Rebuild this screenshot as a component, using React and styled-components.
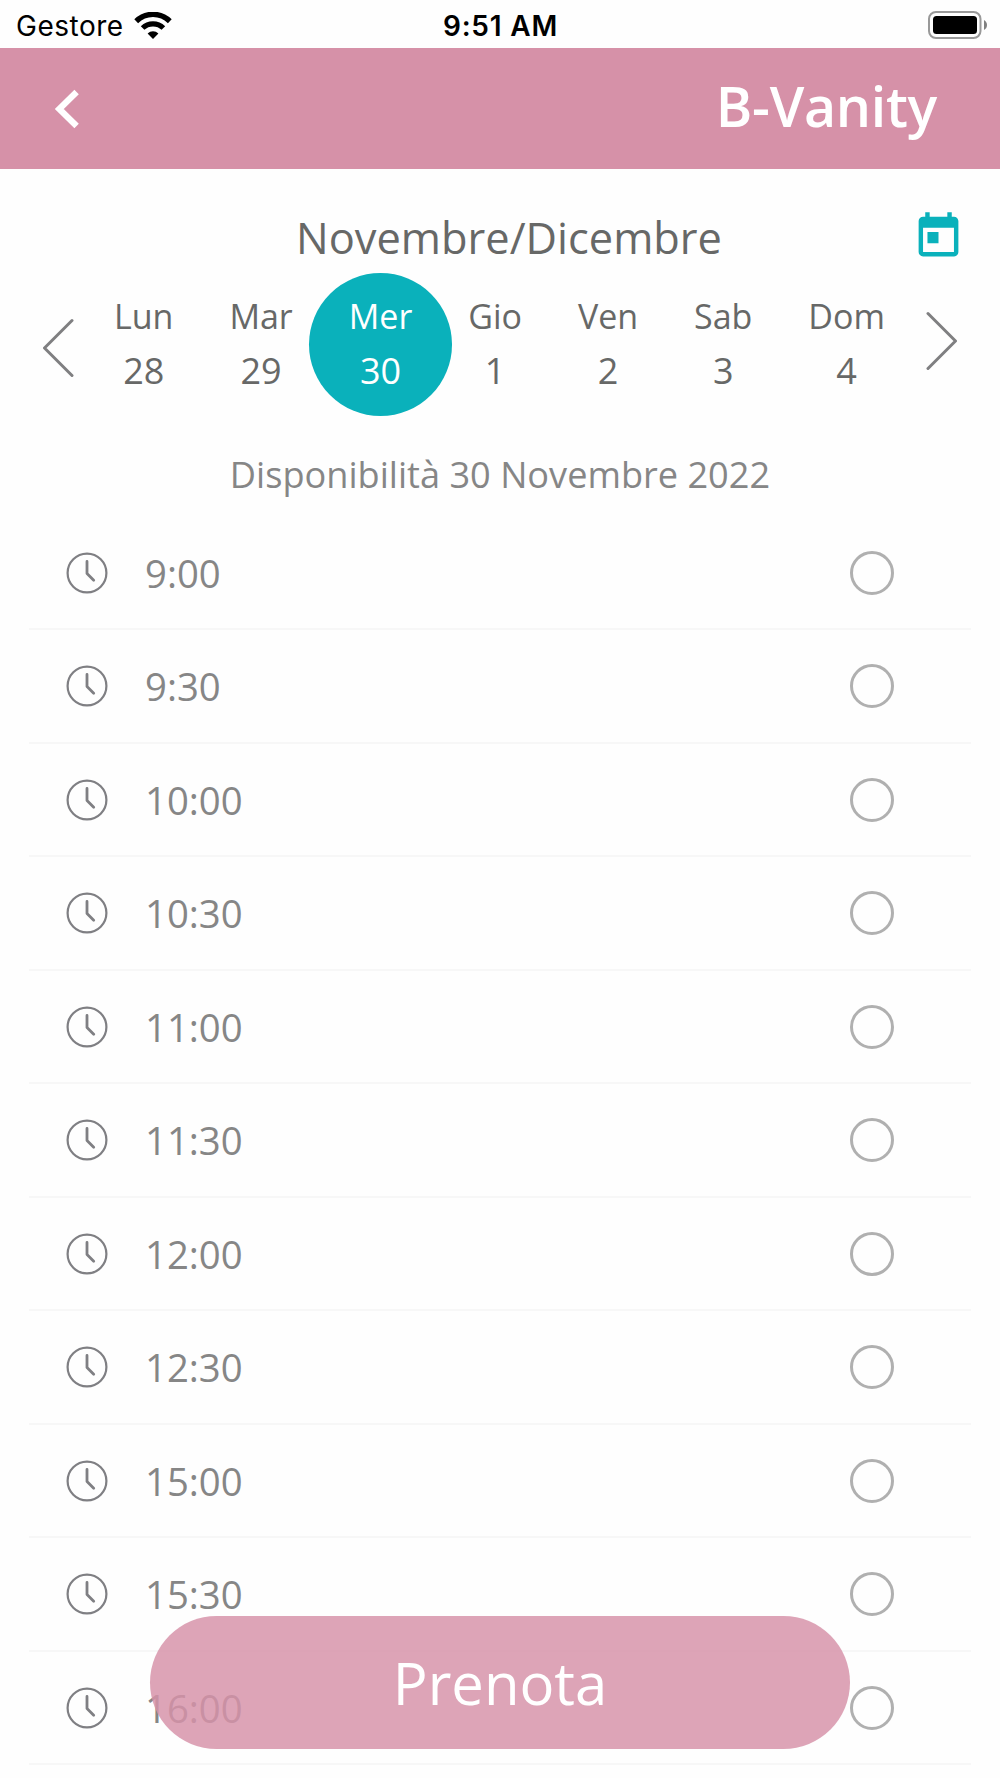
import React, { useState } from 'react';
import styled, { createGlobalStyle } from 'styled-components';
import { MdToday } from 'react-icons/md';

const GlobalStyle = createGlobalStyle`
  * {
    box-sizing: border-box;
  }

  body {
    margin: 0;
    background: #fefefe;
    font-family: 'Open Sans', 'Noto Sans', sans-serif;
  }
`;

const Screen = styled.div`
  position: relative;
  width: 1000px;
  height: 1778px;
  overflow: hidden;
  background: #fefefe;
`;

const StatusBar = styled.div`
  display: grid;
  grid-template-columns: 1fr auto 1fr;
  align-items: center;
  height: 48px;
  padding: 3px 13px 0 16px;
  font-family: Inter, 'Liberation Sans', sans-serif;
  font-size: 28px;
  line-height: 44px;
  color: #000;
`;

const Carrier = styled.div`
  display: flex;
  align-items: center;
  gap: 10px;
  letter-spacing: 0.5px;
`;

const Clock = styled.div`
  margin-left: -2px;
  font-weight: 600;
  letter-spacing: 0.8px;
`;

const BatteryIcon = styled.svg`
  justify-self: end;
  margin-top: -2px;
`;

const Header = styled.header`
  display: flex;
  align-items: center;
  justify-content: space-between;
  height: 121px;
  padding: 0 63px 0 54px;
  background: #d691a8;
`;

const BackButton = styled.button`
  display: flex;
  padding: 0;
  border: none;
  background: none;
  cursor: pointer;
`;

const Brand = styled.h1`
  margin: 0;
  padding-bottom: 5px;
  font-size: 55.5px;
  font-weight: 600;
  line-height: 76px;
  letter-spacing: -0.3px;
  color: #fff;
`;

const MonthBar = styled.div`
  display: grid;
  grid-template-columns: 80px 1fr 80px;
  align-items: center;
  height: 104px;
  padding: 32px 8px 0 26px;
`;

const Month = styled.h2`
  margin: 0;
  padding-top: 1px;
  text-align: center;
  font-size: 43.4px;
  font-weight: 400;
  line-height: 60px;
  color: #676867;
`;

const CalendarButton = styled.button`
  display: flex;
  justify-self: start;
  margin-top: -2px;
  padding: 0;
  border: none;
  background: none;
  color: #0ab1bb;
  cursor: pointer;
`;

const Week = styled.div`
  display: flex;
  align-items: flex-start;
  justify-content: space-between;
  height: 143px;
  padding: 0 42px;
`;

const ArrowButton = styled.button`
  display: flex;
  margin-top: ${(props) => props.$top}px;
  padding: 0;
  border: none;
  background: none;
  cursor: pointer;
`;

const Days = styled.div`
  display: flex;
  justify-content: space-between;
  width: 771px;
  margin-left: -1px;
  padding-top: 16px;
`;

const Day = styled.div`
  position: relative;
  z-index: 0;
  text-align: center;
  color: ${(props) => (props.$active ? '#fff' : '#676867')};
  cursor: pointer;

  &::before {
    content: '';
    display: ${(props) => (props.$active ? 'block' : 'none')};
    position: absolute;
    z-index: -1;
    top: -16px;
    left: 50%;
    width: 143px;
    height: 143px;
    margin-left: -71px;
    border-radius: 50%;
    background: #0ab1bb;
  }
`;

const DayName = styled.div`
  font-size: 34px;
  line-height: 54px;
`;

const DayNumber = styled.div`
  font-size: 36px;
  line-height: 56px;
`;

const Availability = styled.p`
  margin: 0;
  padding-top: 33px;
  height: 100.5px;
  text-align: center;
  font-size: 36.15px;
  line-height: 50px;
  color: #868686;
`;

const SlotList = styled.ul`
  margin: 0;
  padding: 0 29px;
  list-style: none;
`;

const Slot = styled.li`
  display: flex;
  align-items: center;
  height: 113.5px;
  padding: 1px 77px 0 37px;
  border-bottom: 2px solid #f7f7f7;
  cursor: pointer;
`;

const SlotTime = styled.span`
  flex: 1;
  margin-left: 37px;
  font-size: 38.3px;
  line-height: 52px;
  color: #868686;
`;

const Radio = styled.span`
  width: 44px;
  height: 44px;
  border: 3px solid #b0b0b0;
  border-radius: 50%;
  background: ${(props) => (props.$checked ? '#0ab1bb' : 'transparent')};
`;

const BookButton = styled.button`
  position: absolute;
  left: 150px;
  bottom: 29px;
  width: 700px;
  height: 133px;
  padding: 0;
  border: none;
  border-radius: 67px;
  background: rgba(214, 145, 168, 0.83);
  font-family: inherit;
  font-size: 58px;
  color: #fff;
  cursor: pointer;
`;

const WifiIcon = () => (
  <svg width="38" height="28" viewBox="0 0 38 28">
    <path d="M2.2 9.2a24 24 0 0 1 33.6 0" fill="none" stroke="#000" strokeWidth="5.4" />
    <path d="M8.6 16a15 15 0 0 1 20.8 0" fill="none" stroke="#000" strokeWidth="5.2" />
    <path d="M13.6 21.4a8 8 0 0 1 10.8 0L19 27z" />
  </svg>
);

const Battery = () => (
  <BatteryIcon width="60" height="28" viewBox="0 0 60 28">
    <rect x="2" y="1" width="51.5" height="26" rx="7" fill="none" stroke="#999" strokeWidth="2" />
    <rect x="6" y="5" width="44" height="18" rx="3.5" />
    <path d="M57 9c4 2 4 8 0 10z" fill="#808080" />
  </BatteryIcon>
);

const SlotClock = () => (
  <svg width="42" height="42" viewBox="0 0 42 42" fill="none" stroke="#7f7f83">
    <circle cx="21" cy="21" r="19.4" strokeWidth="2.2" />
    <path d="M21 9.5V21.6L27.7 28.3" strokeWidth="2.8" strokeLinecap="round" strokeLinejoin="round" />
  </svg>
);

const week = [
  { name: 'Lun', number: 28 },
  { name: 'Mar', number: 29 },
  { name: 'Mer', number: 30 },
  { name: 'Gio', number: 1 },
  { name: 'Ven', number: 2 },
  { name: 'Sab', number: 3 },
  { name: 'Dom', number: 4 },
];

const times = [
  '9:00',
  '9:30',
  '10:00',
  '10:30',
  '11:00',
  '11:30',
  '12:00',
  '12:30',
  '15:00',
  '15:30',
  '16:00',
];

export default function App() {
  const [day, setDay] = useState(30);
  const [time, setTime] = useState(null);

  return (
    <Screen>
      <GlobalStyle />
      <StatusBar>
        <Carrier>
          Gestore
          <WifiIcon />
        </Carrier>
        <Clock>9:51 AM</Clock>
        <Battery />
      </StatusBar>

      <Header>
        <BackButton>
          <svg width="26" height="40" viewBox="0 0 26 40">
            <path d="M22.6 3L5.3 20L22.6 37" fill="none" stroke="#fff" strokeWidth="6.3" />
          </svg>
        </BackButton>
        <Brand>B-Vanity</Brand>
      </Header>

      <MonthBar>
        <span />
        <Month>Novembre/Dicembre</Month>
        <CalendarButton>
          <MdToday size={53} />
        </CalendarButton>
      </MonthBar>

      <Week>
        <ArrowButton $top={45}>
          <svg width="32" height="60" viewBox="0 0 32 60">
            <path d="M30 2.5L2.5 30L30 57.5" fill="none" stroke="#7f7f81" strokeWidth="3" strokeLinecap="round" strokeLinejoin="round" />
          </svg>
        </ArrowButton>
        <Days>
          {week.map((d) => (
            <Day key={d.number} $active={d.number === day} onClick={() => setDay(d.number)}>
              <DayName>{d.name}</DayName>
              <DayNumber>{d.number}</DayNumber>
            </Day>
          ))}
        </Days>
        <ArrowButton $top={38}>
          <svg width="32" height="60" viewBox="0 0 32 60">
            <path d="M2 2.5L29.5 30L2 57.5" fill="none" stroke="#7f7f81" strokeWidth="3" strokeLinecap="round" strokeLinejoin="round" />
          </svg>
        </ArrowButton>
      </Week>

      <Availability>Disponibilità {day} Novembre 2022</Availability>

      <SlotList>
        {times.map((t) => (
          <Slot key={t} onClick={() => setTime(t)}>
            <SlotClock />
            <SlotTime>{t}</SlotTime>
            <Radio $checked={t === time} />
          </Slot>
        ))}
      </SlotList>

      <BookButton>Prenota</BookButton>
    </Screen>
  );
}
